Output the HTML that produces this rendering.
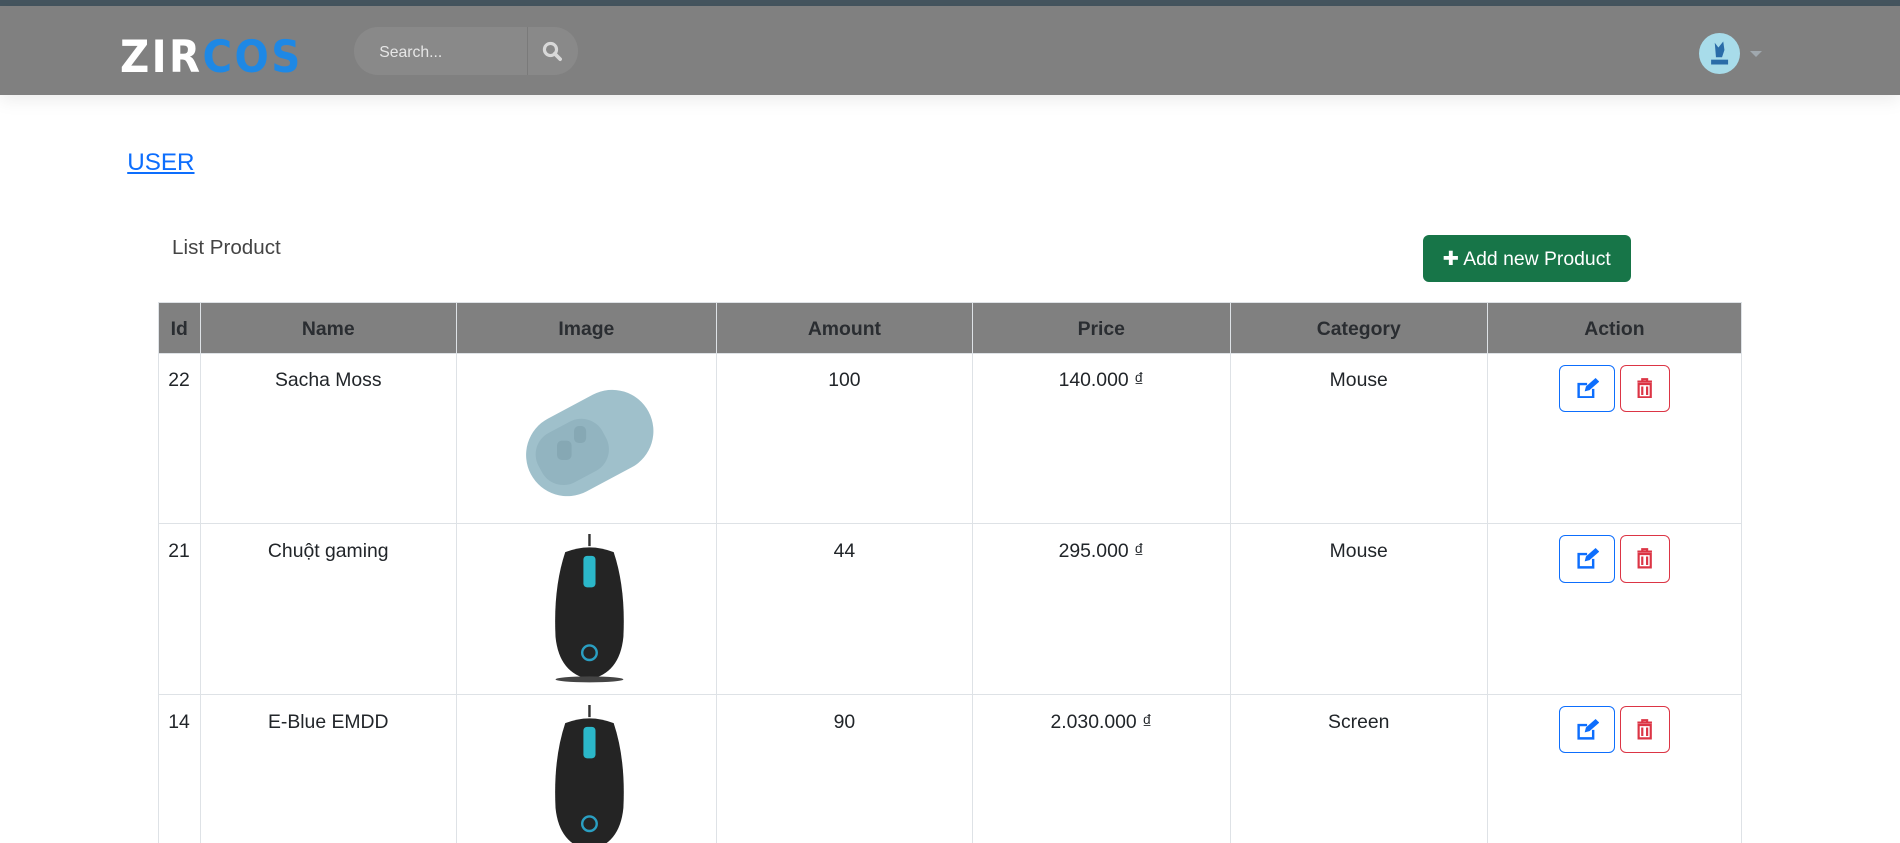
<!DOCTYPE html>
<html><head><meta charset="utf-8"><style>
html,body{margin:0;padding:0;background:#fff;overflow:hidden}
body{zoom:1.2117;width:1568px;height:696px;position:relative;font-family:"Liberation Sans",sans-serif;color:#212529}
.top{position:absolute;left:0;top:0;width:1568px;height:5px;background:#45555f}
.hdr{position:absolute;left:0;top:5px;width:1568px;height:73px;background:#808080;box-shadow:0 4px 14px rgba(0,0,0,.08)}
.logo{position:absolute;left:99px;top:22px;font:bold 37px "DejaVu Sans Condensed","Liberation Sans",sans-serif;letter-spacing:2px;color:#fff;line-height:40px}
.logo span{color:#1e88e5}
.search{position:absolute;left:292px;top:17px;width:185px;height:40px;border-radius:20px;background:#898989}
.search .t{position:absolute;left:21px;top:14px;font-size:13px;color:#e6e6e6}
.search .d{position:absolute;left:143px;top:0;width:1px;height:40px;background:#7a7a7a}
.av{position:absolute;left:1402px;top:22px;width:34px;height:34px;border-radius:50%;background:#a8dcea}
.caret{position:absolute;left:1444px;top:37px;width:0;height:0;border-left:5px solid transparent;border-right:5px solid transparent;border-top:5px solid #a0a8ae}
.user{position:absolute;left:105px;top:123px;font-size:20px;color:#0d6efd;text-decoration:underline}
.lp{position:absolute;left:142px;top:195px;font-size:17px;color:#444}
.add{position:absolute;left:1174px;top:194px;width:172px;height:39px;border-radius:5px;background:#177548;color:#fff;font-size:16px;line-height:41px;text-align:center}
table{position:absolute;left:130px;top:249px;border-collapse:collapse;width:1307px;font-size:16px;table-layout:fixed}
th{background:#808080;height:42px;box-sizing:border-box;border:1px solid #dee2e6;font-weight:bold;color:#2a2d31;padding:2px 0 0;line-height:20px}
td{border:1px solid #dee2e6;height:141px;vertical-align:top;text-align:center;padding:13px 8px 0;box-sizing:border-box;position:relative}
td:first-child{text-align:left}
.btn{display:inline-block;width:46px;height:39px;border:1px solid #0d6efd;border-radius:5px;box-sizing:border-box;vertical-align:top;margin:-4px 2px 0}
.btn.r{border-color:#dc3545;width:41px}
.btn svg{margin-top:10px}
</style></head><body>
<div class="top"></div>
<div class="hdr">
<div class="logo">ZIR<span>COS</span></div>
<div class="search"><div class="t">Search...</div><div class="d"></div>
<svg style="position:absolute;left:155px;top:12px" width="17" height="17" viewBox="0 0 17 17"><circle cx="7" cy="7" r="5" fill="none" stroke="#d8d8d8" stroke-width="2.6"/><path d="M10.5 10.5L15 15" stroke="#d8d8d8" stroke-width="3" stroke-linecap="round"/></svg></div>
<div class="av"><svg width="34" height="34"><path d="M13 8l3 4 4-5 1 7-2 6h-5z" fill="#2a6ca8"/><rect x="10" y="22" width="14" height="4" fill="#2a6ca8"/></svg></div>
<div class="caret"></div>
</div>
<div class="user">USER</div>
<div class="lp">List Product</div>
<div class="add">✚ Add new Product</div>
<table>
<colgroup><col style="width:35px"><col style="width:211px"><col style="width:215px"><col style="width:211px"><col style="width:213px"><col style="width:212px"><col style="width:210px"></colgroup>
<tr><th>Id</th><th>Name</th><th>Image</th><th>Amount</th><th>Price</th><th>Category</th><th>Action</th></tr>
<tr><td>22</td><td>Sacha Moss</td><td><svg width="130" height="110" style="position:absolute;left:45px;top:22px" viewBox="0 0 130 110"><rect x="10" y="18" width="110" height="68" rx="34" transform="rotate(-28 65 52)" fill="#9fc0cb"/><rect x="22" y="32" width="60" height="46" rx="20" transform="rotate(-28 60 60)" fill="#92b4c0"/><rect x="52" y="38" width="10" height="14" rx="4" fill="#86a8b4"/><rect x="38" y="50" width="12" height="16" rx="4" fill="#86a8b4"/></svg></td><td>100</td><td>140.000 ₫</td><td>Mouse</td><td><span class="btn"><svg width="20" height="17" viewBox="0 0 20 17"><path d="M2 4h8v2H4v9h10v-6h2v8H2z" fill="#0d6efd"/><path d="M8 11l1-4 8-7 3 3-8 7z" fill="#0d6efd"/></svg></span><span class="btn r"><svg width="16" height="17" viewBox="0 0 16 17"><path d="M2 3h12M6 3V1h4v2M3 5h10v11H3z M6 7v7M10 7v7" fill="none" stroke="#dc3545" stroke-width="1.8"/></svg></span></td></tr>
<tr><td>21</td><td>Chuột gaming</td><td><svg width="80" height="125" style="position:absolute;left:70px;top:8px" viewBox="0 0 80 125"><path d="M40 0v10" stroke="#333" stroke-width="2"/><path d="M20 15q20-8 40 0 10 30 8 70-3 30-28 35-25-5-28-35-2-40 8-70z" fill="#242424"/><rect x="35" y="18" width="10" height="26" rx="3" fill="#2bb7c9"/><ellipse cx="40" cy="120" rx="28" ry="2.5" fill="#444"/><circle cx="40" cy="98" r="6" fill="none" stroke="#2a9fc2" stroke-width="2"/></svg></td><td>44</td><td>295.000 ₫</td><td>Mouse</td><td><span class="btn"><svg width="20" height="17" viewBox="0 0 20 17"><path d="M2 4h8v2H4v9h10v-6h2v8H2z" fill="#0d6efd"/><path d="M8 11l1-4 8-7 3 3-8 7z" fill="#0d6efd"/></svg></span><span class="btn r"><svg width="16" height="17" viewBox="0 0 16 17"><path d="M2 3h12M6 3V1h4v2M3 5h10v11H3z M6 7v7M10 7v7" fill="none" stroke="#dc3545" stroke-width="1.8"/></svg></span></td></tr>
<tr><td>14</td><td>E-Blue EMDD</td><td><svg width="80" height="125" style="position:absolute;left:70px;top:8px" viewBox="0 0 80 125"><path d="M40 0v10" stroke="#333" stroke-width="2"/><path d="M20 15q20-8 40 0 10 30 8 70-3 30-28 35-25-5-28-35-2-40 8-70z" fill="#242424"/><rect x="35" y="18" width="10" height="26" rx="3" fill="#2bb7c9"/><circle cx="40" cy="98" r="6" fill="none" stroke="#2a9fc2" stroke-width="2"/></svg></td><td>90</td><td>2.030.000 ₫</td><td>Screen</td><td><span class="btn"><svg width="20" height="17" viewBox="0 0 20 17"><path d="M2 4h8v2H4v9h10v-6h2v8H2z" fill="#0d6efd"/><path d="M8 11l1-4 8-7 3 3-8 7z" fill="#0d6efd"/></svg></span><span class="btn r"><svg width="16" height="17" viewBox="0 0 16 17"><path d="M2 3h12M6 3V1h4v2M3 5h10v11H3z M6 7v7M10 7v7" fill="none" stroke="#dc3545" stroke-width="1.8"/></svg></span></td></tr>
</table>
</body></html>
